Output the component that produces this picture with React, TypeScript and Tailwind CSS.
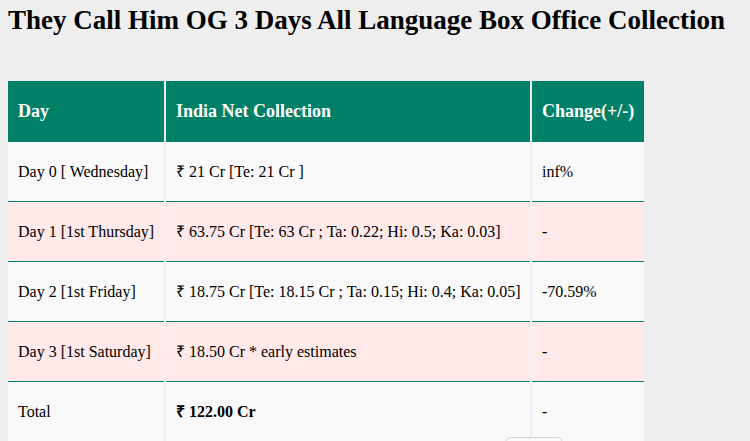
import React from 'react';

interface Row {
    day: string;
    collection: React.ReactNode;
    change: string;
}

const rows: Row[] = [
    { day: 'Day 0 [ Wednesday]', collection: '₹ 21 Cr [Te: 21 Cr ]', change: 'inf%' },
    { day: 'Day 1 [1st Thursday]', collection: '₹ 63.75 Cr [Te: 63 Cr ; Ta: 0.22; Hi: 0.5; Ka: 0.03]', change: '-' },
    { day: 'Day 2 [1st Friday]', collection: '₹ 18.75 Cr [Te: 18.15 Cr ; Ta: 0.15; Hi: 0.4; Ka: 0.05]', change: '-70.59%' },
    { day: 'Day 3 [1st Saturday]', collection: '₹ 18.50 Cr * early estimates', change: '-' },
    { day: 'Total', collection: <b>₹ 122.00 Cr</b>, change: '-' },
];

const cell = 'pl-[10px] pr-1 pt-5 pb-[21px] leading-[19px] whitespace-nowrap shadow-[inset_0_-1px_0_#00806a]';

const App: React.FC = () => {
    return (
        <div className="relative min-h-screen bg-[#eeeeee] text-black font-['Liberation_Serif','Times_New_Roman',serif] overflow-hidden">
            <h2 className="pl-2 pt-[5px] text-[27px] leading-[31px] font-bold whitespace-nowrap">
                They Call Him OG 3 Days All Language Box Office Collection
            </h2>

            <table className="mt-[45px] ml-[6px] w-[640px] table-fixed border-separate border-spacing-x-[2px] border-spacing-y-0 text-[16px]">
                <thead>
                    <tr className="bg-[#008066] text-white text-left">
                        <th className="w-[156px] pl-[10px] pr-1 py-5 leading-[21px] text-[18px] font-bold whitespace-nowrap">Day</th>
                        <th className="w-[364px] pl-[10px] pr-1 py-5 leading-[21px] text-[18px] font-bold whitespace-nowrap">India Net Collection</th>
                        <th className="w-[112px] pl-[10px] pr-1 py-5 leading-[21px] text-[18px] font-bold whitespace-nowrap">Change(+/-)</th>
                    </tr>
                </thead>
                <tbody>
                    {rows.map((row, i) => (
                        <tr key={i} className={i % 2 === 0 ? 'bg-[#f9f9f9]' : 'bg-[#ffe9e9]'}>
                            <td className={cell}>{row.day}</td>
                            <td className={cell}>{row.collection}</td>
                            <td className={cell}>{row.change}</td>
                        </tr>
                    ))}
                </tbody>
            </table>

            <div className="absolute left-[505px] top-[437px] w-[58px] h-[20px] rounded-md border border-[#d4d4d4] bg-[#f9f9f9]" />
        </div>
    );
};

export default App;
